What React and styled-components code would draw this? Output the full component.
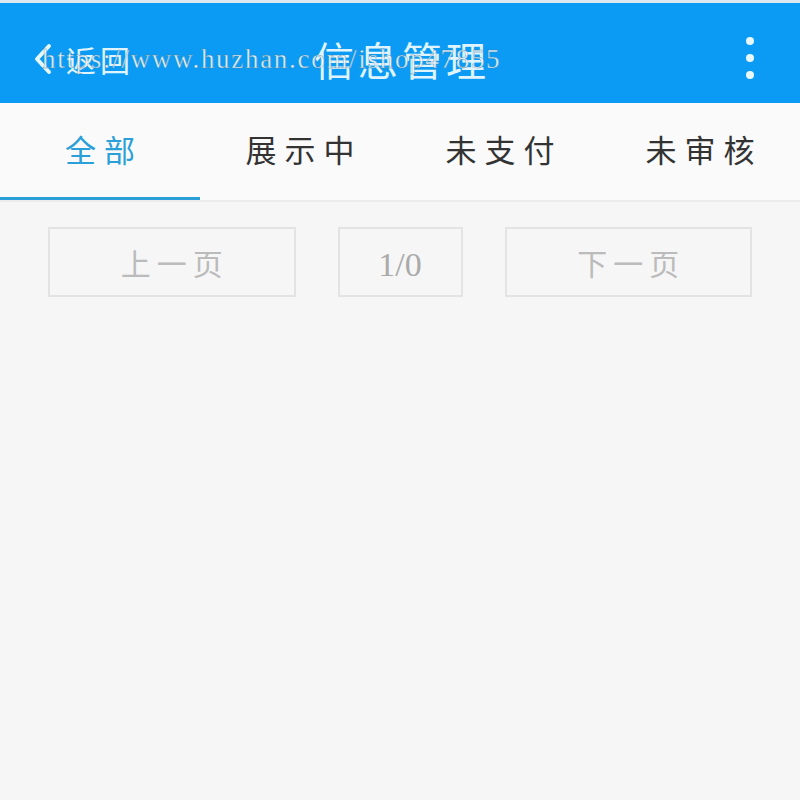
import React, { useState } from 'react'
import styled, { createGlobalStyle } from 'styled-components'

const GlobalStyle = createGlobalStyle`
  html, body {
    margin: 0;
    padding: 0;
    background: #f6f6f6;
  }
  body {
    font-family: "Noto Sans CJK SC", "Noto Sans", sans-serif;
  }
`

const tabs = ['全部', '展示中', '未支付', '未审核']

const App = () => {
  const [active, setActive] = useState(0)

  return (
    <Page>
      <GlobalStyle />
      <TopStrip />
      <Header>
        <BackButton>
          <svg width="18" height="32" viewBox="0 0 18 32">
            <path d="M15 3 L3 16 L15 29" fill="none" stroke="#e6f7ff" strokeWidth="4" strokeLinecap="round" strokeLinejoin="round" />
          </svg>
          <BackText>返回</BackText>
        </BackButton>
        <Title>信息管理</Title>
        <Menu>
          <Dot />
          <Dot />
          <Dot />
        </Menu>
        <Watermark>https://www.huzhan.com/ishop47855</Watermark>
      </Header>

      <TabBar>
        {tabs.map((t, i) => (
          <Tab key={t} $active={i === active} onClick={() => setActive(i)}>
            <TabLabel>{t}</TabLabel>
          </Tab>
        ))}
      </TabBar>

      <Pager>
        <PageButton>上一页</PageButton>
        <PageCount>1/0</PageCount>
        <PageButton>下一页</PageButton>
      </Pager>
    </Page>
  )
}

const Page = styled.div`
  min-height: 800px;
  background: #f6f6f6;
`

const TopStrip = styled.div`
  height: 3px;
  background: #dde9ef;
`

const Header = styled.header`
  position: relative;
  height: 100px;
  box-sizing: border-box;
  padding: 12px 46px 0 34px;
  background: #0b9bf4;
  display: grid;
  grid-template-columns: 1fr auto 1fr;
  align-items: center;
`

const BackButton = styled.div`
  display: flex;
  align-items: center;
  gap: 14px;
`

const BackText = styled.span`
  font-size: 30px;
  color: #dff4ff;
  letter-spacing: 4px;
`

const Title = styled.h1`
  margin: 0;
  padding-left: 16px;
  font-size: 40px;
  font-weight: 400;
  color: #dff4ff;
  letter-spacing: 4px;
`

const Menu = styled.div`
  justify-self: end;
  display: flex;
  flex-direction: column;
  gap: 9px;
  margin-top: -2px;
`

const Dot = styled.span`
  width: 8px;
  height: 8px;
  border-radius: 50%;
  background: #e8f8ff;
`

const Watermark = styled.div`
  position: absolute;
  left: 42px;
  top: 41px;
  font-family: "Liberation Serif", serif;
  font-size: 27px;
  letter-spacing: 1.7px;
  color: #ffffff;
  opacity: 0.85;
  -webkit-text-stroke: 0.4px #4a7f9c;
  pointer-events: none;
  white-space: nowrap;
`

const TabBar = styled.nav`
  display: grid;
  grid-template-columns: repeat(4, 1fr);
  background: #fafafa;
  border-bottom: 2px solid #ececec;
`

const Tab = styled.div`
  height: 97px;
  display: flex;
  align-items: center;
  justify-content: center;
  box-sizing: border-box;
  border-bottom: 3px solid ${p => (p.$active ? '#2a9fd8' : 'transparent')};
  color: ${p => (p.$active ? '#2a9fd8' : '#333333')};
  cursor: pointer;
`

const TabLabel = styled.span`
  font-size: 31px;
  letter-spacing: 8px;
  margin-right: -8px;
  margin-bottom: 4px;
`

const Pager = styled.div`
  display: grid;
  grid-template-columns: 1fr 125px 1fr;
  column-gap: 42px;
  padding: 25px 48px 0;
`

const PageButton = styled.div`
  height: 70px;
  box-sizing: border-box;
  border: 2px solid #e3e3e3;
  background: #f6f6f6;
  display: flex;
  align-items: center;
  justify-content: center;
  font-size: 30px;
  letter-spacing: 6px;
  color: #bbbbbb;
  padding-left: 6px;
`

const PageCount = styled(PageButton)`
  font-family: "Liberation Serif", serif;
  font-size: 34px;
  letter-spacing: 0;
  padding: 5px 0 0;
  color: #aaaaaa;
`

export default App
